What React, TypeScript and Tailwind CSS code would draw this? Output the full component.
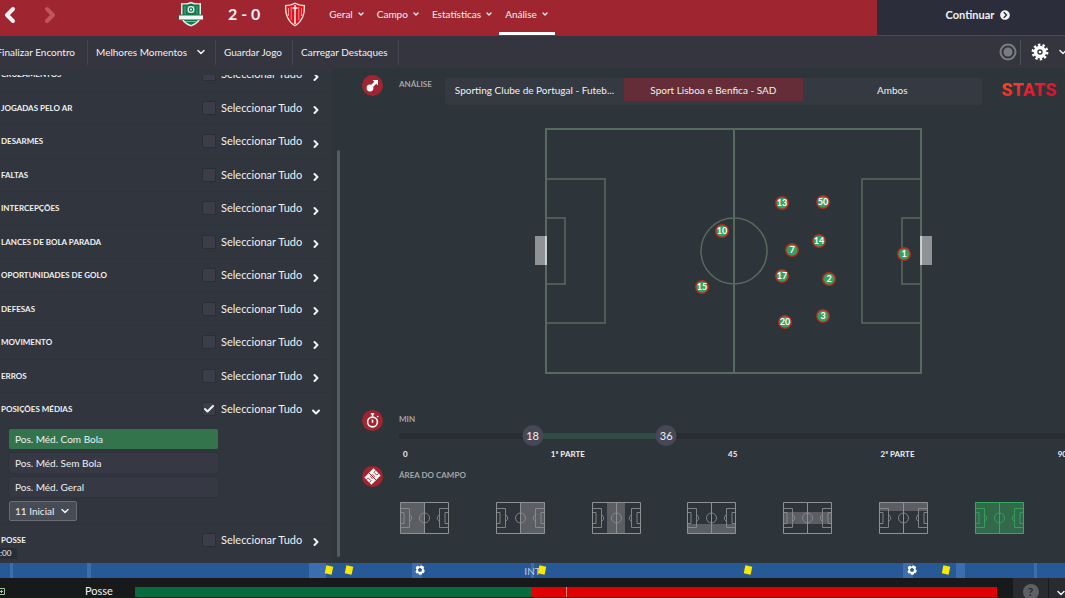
import { useState } from 'react'
import { Check, ChevronDown, ChevronLeft, ChevronRight } from 'lucide-react'
import { FaChevronCircleRight } from 'react-icons/fa'
import clsx from 'clsx'

type Zone = { x: number; y: number; w: number; h: number }

const NAV = ['Geral', 'Campo', 'Estatísticas', 'Análise']

const CATEGORIES = [
  'Cruzamentos',
  'Jogadas pelo ar',
  'Desarmes',
  'Faltas',
  'Intercepções',
  'Lances de bola parada',
  'Oportunidades de golo',
  'Defesas',
  'Movimento',
  'Erros',
  'Posições médias',
  'Posse',
]

const POSITIONS = ['Pos. Méd. Com Bola', 'Pos. Méd. Sem Bola', 'Pos. Méd. Geral']

const TEAMS = ['Sporting Clube de Portugal - Futeb...', 'Sport Lisboa e Benfica - SAD', 'Ambos']

const PLAYERS = [
  { n: 10, x: 188, y: 103 },
  { n: 15, x: 168, y: 159 },
  { n: 13, x: 248, y: 75 },
  { n: 50, x: 289, y: 74 },
  { n: 14, x: 285, y: 113 },
  { n: 7, x: 258, y: 122 },
  { n: 17, x: 248, y: 148 },
  { n: 2, x: 295, y: 151 },
  { n: 20, x: 251, y: 194 },
  { n: 3, x: 289, y: 188 },
  { n: 1, x: 370, y: 126 },
]

const ZONES: { name: string; zone: Zone }[] = [
  { name: 'Meio-campo defensivo', zone: { x: 0, y: 0, w: 24, h: 32 } },
  { name: 'Meio-campo ofensivo', zone: { x: 25, y: 0, w: 24, h: 32 } },
  { name: 'Zona central', zone: { x: 15, y: 0, w: 18, h: 32 } },
  { name: 'Flanco direito', zone: { x: 0, y: 22, w: 49, h: 10 } },
  { name: 'Corredor central', zone: { x: 0, y: 10, w: 49, h: 12 } },
  { name: 'Flanco esquerdo', zone: { x: 0, y: 0, w: 49, h: 9 } },
  { name: 'Campo inteiro', zone: { x: 0, y: 0, w: 49, h: 32 } },
]

// timeline values are percentages of the bar
const PHASES = [
  { at: 0.9, w: 0.3 },
  { at: 8.2, w: 0.3 },
  { at: 29, w: 1.6 },
  { at: 38.7, w: 0.9 },
  { at: 49.9, w: 0.2 },
  { at: 84.8, w: 0.9 },
  { at: 89.8, w: 0.8 },
  { at: 97.1, w: 0.3 },
]

const EVENTS = [
  { kind: 'card', at: 30.9 },
  { kind: 'card', at: 32.8 },
  { kind: 'goal', at: 39.4 },
  { kind: 'card', at: 50.9 },
  { kind: 'card', at: 70.2 },
  { kind: 'goal', at: 85.6 },
  { kind: 'card', at: 88.8 },
]

function SportingCrest() {
  return (
    <svg width="26" height="26" viewBox="0 0 26 26" aria-label="Sporting">
      <path d="M3 2Q8 3 13 .8 18 3 23 2L23 15Q23 22 13 25.500 3 22 3 15Z" fill="#e4efe9" />
      <path d="M4.500 3.500Q9 4 13 2.400 17 4 21.500 3.500V15Q21 21 13 24 5 21 4.500 15Z" fill="#12764c" />
      <path d="M7 5v9M19 5v9" stroke="#5fa587" strokeWidth="1" />
      <path d="M9.500 5h7v7h-7Z" fill="#5fa587" />
      <circle cx="13" cy="8.500" r="2.800" fill="#12764c" stroke="#e4efe9" strokeWidth="1.200" />
      <circle cx="13" cy="8.500" r="1.100" fill="#e4efe9" />
      <path d="M2 13.500h22l1.500 1.500v4h-25v-4Z" fill="#12764c" />
      <path d="M1 14.500h24v4H1z" fill="#f4f7f5" />
      <path d="M7 20.500h12" stroke="#7db59b" strokeWidth="1" />
    </svg>
  )
}

function BenficaCrest() {
  return (
    <svg width="22" height="25" viewBox="0 0 22 25" aria-label="Benfica">
      <path d="M1 3Q6 3 11 .5 16 3 21 3 22 18 11 24.500 0 18 1 3Z" fill="#f3e1e1" />
      <path d="M2.300 4.200Q7 4 11 2 15 4 19.700 4.200 20.300 17 11 23 1.700 17 2.300 4.200Z" fill="#df1219" />
      <path d="M7.200 5v13M14.800 5v13M4.500 6v8M17.500 6v8" stroke="#f4a5a6" strokeWidth=".9" />
      <path d="M11 3v19M8.500 6h5" stroke="#fff" strokeWidth="1.400" />
    </svg>
  )
}

function Gear() {
  return (
    <svg width="18" height="18" viewBox="-9 -9 18 18" fill="none">
      <circle r="4.500" stroke="#fff" strokeWidth="3.600" />
      <circle r="7.200" stroke="#fff" strokeWidth="2.400" strokeDasharray="2.400 2.124" />
      <circle r="1.300" fill="#fff" />
    </svg>
  )
}

function Ball() {
  return (
    <svg width="10" height="10" viewBox="-5 -5 10 10">
      <circle r="4.800" fill="#fff" />
      <path d="M0-2.200 2.100-.7 1.300 1.800H-1.300L-2.100-.7Z" fill="#275996" />
      <path d="M-2.200-5h3.200L-.6-3.200ZM5-2.800V.6L3.300-1.200ZM-5-2.400V1.600L-3.300-.3ZM4.500 3 1.800 5 2.300 2.900ZM-4 3.600-1 5-1.500 3.300Z" fill="#275996" />
    </svg>
  )
}

function SectionIcon({ name }: { name: 'shot' | 'clock' | 'field' }) {
  return (
    <svg width="21" height="21" viewBox="0 0 21 21" className="shrink-0">
      <circle cx="10.500" cy="10.500" r="10.500" fill="#a02530" />
      {name === 'shot' && (
        <g>
          <circle cx="8" cy="13" r="3.400" fill="#fff" />
          <path d="M8.500 12.500 13.500 7.500" stroke="#fff" strokeWidth="2.800" />
          <path d="M10.500 5H16v5.500Z" fill="#fff" />
        </g>
      )}
      {name === 'clock' && (
        <g fill="none" stroke="#fff" strokeWidth="1.600">
          <circle cx="10.500" cy="12" r="4.900" />
          <path d="M8.800 3.700h3.400M10.500 3.500v3M15.200 6l1 1M10.500 9.500v3.200" />
        </g>
      )}
      {name === 'field' && (
        <g transform="rotate(-45 10.500 10.500)">
          <rect x="4" y="5.500" width="13" height="10" fill="#fff" />
          <path d="M10.500 5.500v10M4 8.500h2.500v4H4M17 8.500h-2.500v4H17" fill="none" stroke="#a02530" strokeWidth=".9" />
          <circle cx="10.500" cy="10.500" r="1.700" fill="none" stroke="#a02530" strokeWidth=".9" />
        </g>
      )}
    </svg>
  )
}

function MiniPitch({ zone, active }: { zone: Zone; active: boolean }) {
  return (
    <svg width="49" height="32" viewBox="0 0 49 32" fill="none" stroke={active ? '#34a85f' : '#8d9192'}>
      <rect x={zone.x} y={zone.y} width={zone.w} height={zone.h} fill={active ? '#32694a' : '#5b5e63'} stroke="none" />
      <path d="M.5.5h48v31H.5ZM24.500.5v31" />
      <g opacity=".85">
        <circle cx="24.500" cy="16" r="5" />
        <path d="M.5 6.500h9v19h-9M.5 10.500h3.500v11H.5M9.500 12.500Q14 16 9.500 19.500" />
        <path d="M48.500 6.500h-9v19h9M48.500 10.500H45v11h3.500M39.500 12.500Q35 16 39.500 19.500" />
      </g>
    </svg>
  )
}

function Pitch() {
  return (
    <svg width="398" height="246" viewBox="0 0 398 246" fill="none">
      <g stroke="#58695f" strokeWidth="2">
        <path d="M12 1H387V245H12ZM200 1V245" />
        <path d="M12 51H71V195H12M12 90H31V156H12M387 51H328V195H387M387 90H368V156H387" strokeWidth="1.500" />
        <circle cx="200" cy="123" r="33" strokeWidth="1.500" />
      </g>
      <path d="M1 108h11v29H1ZM387 108h11v29h-11Z" fill="#909396" />
      <path d="M12 108v29M387 108v29" stroke="#e8eaea" strokeWidth="1.500" />
      {PLAYERS.map(p => (
        <g key={p.n}>
          <circle cx={p.x} cy={p.y} r="6.300" fill="#36a063" stroke="#b8281c" strokeWidth="1.500" />
          <text x={p.x} y={p.y + 3} textAnchor="middle" fill="#fff" className="text-[9px] font-bold">{p.n}</text>
        </g>
      ))}
    </svg>
  )
}

export default function App() {
  const [checked, setChecked] = useState<string[]>(['Posições médias'])
  const [position, setPosition] = useState(POSITIONS[0])
  const [team, setTeam] = useState(1)
  const [zone, setZone] = useState(6)
  const [range, setRange] = useState([18, 36])

  function toggle(name: string) {
    setChecked(c => (c.includes(name) ? c.filter(n => n !== name) : [...c, name]))
  }

  function moveThumb(i: number, value: number) {
    setRange(r => (i === 0 ? [Math.min(value, r[1]), r[1]] : [r[0], Math.max(value, r[0])]))
  }

  return (
    <div className="flex h-screen flex-col overflow-hidden bg-[#2d343a] font-[Lato,sans-serif] text-[10px] leading-4 text-[#f0f1f2]">
      {/* Header */}
      <header className="flex h-9 shrink-0 border-b border-[#8d2c38] bg-[#9f2630]">
        <div className="-ml-[2px] flex w-[180px] shrink-0 items-center pb-[5px]">
          <button aria-label="Anterior" className="w-10"><ChevronLeft className="size-6" strokeWidth={4} /></button>
          <button aria-label="Seguinte" className="text-[#c1565c]"><ChevronRight className="size-6" strokeWidth={4} /></button>
        </div>
        <div className="flex items-center gap-6 pb-[7px]">
          <SportingCrest />
          <span className="text-[16px] font-bold">2 - 0</span>
          <BenficaCrest />
        </div>
        <nav className="ml-[17px] flex flex-1">
          {NAV.map((item, i) => (
            <button
              key={item}
              className={clsx(
                'flex items-center gap-1 border-b-3 px-[6px] pb-1',
                i === NAV.length - 1 ? 'border-white' : 'border-transparent'
              )}
            >
              {item}
              <ChevronDown className="size-2" strokeWidth={4} />
            </button>
          ))}
        </nav>
        <button className="flex w-[188px] shrink-0 items-center justify-center gap-[6px] bg-[#2b2d3b] pb-[6px] pl-[14px] text-[11px] font-bold">
          Continuar
          <FaChevronCircleRight className="size-[10px]" />
        </button>
      </header>

      {/* Toolbar */}
      <div className="flex h-8 shrink-0 items-center bg-[#34353f]">
        <div className="flex h-[25px] divide-x divide-[#44464f] border-r border-[#44464f]">
          <button className="-ml-3 w-[100px] pr-3 text-right whitespace-nowrap">Finalizar Encontro</button>
          <button className="flex items-center gap-2 px-2">
            Melhores Momentos
            <ChevronDown className="size-3" strokeWidth={3} />
          </button>
          <button className="pr-[10px] pl-2">Guardar Jogo</button>
          <button className="pr-[10px] pl-2">Carregar Destaques</button>
        </div>
        <div className="-mr-1 ml-auto flex h-[25px] items-center">
          <button aria-label="Gravar" className="pr-[3px]">
            <svg width="18" height="18" viewBox="-9 -9 18 18">
              <circle r="7.500" fill="none" stroke="#797b82" strokeWidth="2" />
              <circle r="4.500" fill="#797b82" />
            </svg>
          </button>
          <button aria-label="Opções" className="flex h-full items-center gap-2 border-l border-[#50525a] pl-[10px]">
            <Gear />
            <ChevronDown className="size-3" strokeWidth={3} />
          </button>
        </div>
      </div>

      <div className="flex min-h-0 flex-1">
        {/* Filters */}
        <aside className="relative flex w-[332px] shrink-0 flex-col bg-[#31353d] pt-[7px]">
          <div className="flex min-h-0 flex-1 flex-col overflow-hidden">
            <div className="-mt-[18px] flex flex-1 flex-col pb-[7px]">
              {CATEGORIES.map(name => {
                const open = name === 'Posições médias'
                return (
                  <div key={name} className="contents">
                    <div className="flex min-h-0 flex-1 basis-0 items-center border-t border-[#2e3239] pl-px">
                      <span className="w-[201px] text-[8px] font-bold uppercase">{name}</span>
                      <label className="flex flex-1 items-center gap-[5px] text-[11px]">
                        <span className="grid size-[14px] place-items-center">
                          <input
                            type="checkbox"
                            checked={checked.includes(name)}
                            onChange={() => toggle(name)}
                            className="col-start-1 row-start-1 size-[14px] appearance-none rounded-[2px] border border-[#2c2e37] bg-[#3b3d48]"
                          />
                          {checked.includes(name) && (
                            <Check className="pointer-events-none col-start-1 row-start-1 size-3" strokeWidth={4} />
                          )}
                        </span>
                        Seleccionar Tudo
                      </label>
                      <button aria-label={`Abrir ${name}`} className="w-[22px] pt-[5px]">
                        {open
                          ? <ChevronDown className="size-3" strokeWidth={4} />
                          : <ChevronRight className="size-3" strokeWidth={4} />}
                      </button>
                    </div>
                    {open && (
                      <div className="flex h-[97px] shrink-0 flex-col items-start gap-1 px-[9px] pt-[3px]">
                        {POSITIONS.map(p => (
                          <button
                            key={p}
                            onClick={() => setPosition(p)}
                            className={clsx(
                              'h-5 w-[209px] rounded-[2px] px-[6px] text-left',
                              p === position ? 'bg-[#33744d]' : 'bg-[#363943] shadow-[0_0_1px_#23262c]'
                            )}
                          >
                            {p}
                          </button>
                        ))}
                        <div className="grid items-center">
                          <select
                            aria-label="Jogadores"
                            className="col-start-1 row-start-1 h-5 w-[68px] appearance-none rounded-[2px] border border-[#686c75] bg-[#474b55] pl-[5px]"
                          >
                            <option>11 Inicial</option>
                          </select>
                          <ChevronDown className="pointer-events-none col-start-1 row-start-1 mr-[6px] size-3 justify-self-end" strokeWidth={3} />
                        </div>
                      </div>
                    )}
                  </div>
                )
              })}
            </div>
          </div>
          <span className="absolute bottom-1 left-0 bg-[#2a2c33] pr-[6px] text-[8px] leading-[11px]">:00</span>
        </aside>
        <div className="flex w-[9px] shrink-0 flex-col justify-end pb-[6px] pl-[5px]">
          <div className="h-5/6 w-[3px] rounded-full bg-[#555c60]" />
        </div>

        {/* Analysis */}
        <main className="flex min-w-0 flex-1 flex-col pt-[7px] pl-[21px]">
          <section className="flex gap-4 pr-2">
            <SectionIcon name="shot" />
            <div className="flex min-w-0 flex-1">
              <h2 className="w-[46px] text-[8px] leading-[18px] font-bold text-[#a3a7aa]">ANÁLISE</h2>
              <div className="mt-[3px] grid min-w-0 flex-1 grid-cols-3 overflow-hidden rounded-[3px] bg-[#353941]">
                {TEAMS.map((name, i) => (
                  <button
                    key={name}
                    onClick={() => setTeam(i)}
                    className={clsx('h-[23px] truncate px-[6px]', i === team && 'bg-[#652d37]')}
                  >
                    {name}
                  </button>
                ))}
              </div>
              <strong className="ml-5 bg-linear-to-br from-[#ff5a1c] via-[#e81c2e] to-[#c8102e] bg-clip-text font-[Roboto,sans-serif] text-[18px] leading-[30px] font-black text-transparent">
                STATS
              </strong>
            </div>
          </section>

          <div className="-mr-1 flex flex-1 justify-center pt-[23px] pl-[35px]">
            <Pitch />
          </div>

          <section className="flex h-14 shrink-0 gap-4">
            <SectionIcon name="clock" />
            <div className="-mr-[2px] min-w-0 flex-1">
              <h2 className="h-[15px] text-[8px] leading-[18px] font-bold text-[#a3a7aa]">MIN</h2>
              <div className="relative flex h-[21px] items-center">
                <div className="h-[6px] w-full rounded-full bg-[#282d34]" />
                <div
                  className="absolute h-[6px] bg-[#2d4d42]"
                  style={{ left: `${range[0] / 0.9}%`, width: `${(range[1] - range[0]) / 0.9}%` }}
                />
                {range.map((value, i) => (
                  <label key={i}>
                    <input
                      type="range"
                      min={0}
                      max={90}
                      value={value}
                      aria-label={i === 0 ? 'Minuto inicial' : 'Minuto final'}
                      onChange={e => moveThumb(i, Number(e.target.value))}
                      className="absolute inset-0 w-full opacity-0"
                    />
                    <span
                      className="pointer-events-none absolute top-0 flex size-[21px] -translate-x-1/2 items-center justify-center rounded-full bg-[#474855] text-[11px]"
                      style={{ left: `${value / 0.9}%` }}
                    >
                      {value}
                    </span>
                  </label>
                ))}
              </div>
              <div className="flex justify-between pl-1 text-[8px] font-bold">
                <span>0</span>
                <span>1ª PARTE</span>
                <span>45</span>
                <span>2ª PARTE</span>
                <span>90</span>
              </div>
            </div>
          </section>

          <section className="flex h-[97px] shrink-0 gap-4">
            <SectionIcon name="field" />
            <div className="min-w-0 flex-1">
              <h2 className="mb-[18px] text-[8px] leading-[18px] font-bold text-[#a3a7aa]">ÁREA DO CAMPO</h2>
              <div className="flex justify-between pr-[41px] pl-px">
                {ZONES.map((z, i) => (
                  <button key={z.name} aria-label={z.name} onClick={() => setZone(i)}>
                    <MiniPitch zone={z.zone} active={i === zone} />
                  </button>
                ))}
              </div>
            </div>
          </section>
        </main>
      </div>

      {/* Match timeline */}
      <div className="relative h-[15px] shrink-0 bg-[#275996]">
        {PHASES.map(p => (
          <span key={p.at} className="absolute inset-y-0 bg-[#3c6eaf]" style={{ left: `${p.at}%`, width: `${p.w}%` }} />
        ))}
        <span className="absolute left-1/2 -translate-x-1/2 text-[#b9cbe2]">INT</span>
        {EVENTS.map(e => (
          <span key={e.at} className="absolute top-[2px] -translate-x-1/2" style={{ left: `${e.at}%` }}>
            {e.kind === 'goal' ? <Ball /> : <span className="mt-px block h-2 w-[7px] rotate-12 bg-[#fbe700]" />}
          </span>
        ))}
      </div>

      {/* Possession */}
      <footer className="flex h-5 shrink-0 items-end bg-[#17191a]">
        <div className="flex w-[135px] shrink-0 items-center">
          <svg width="5" height="7" viewBox="0 0 5 7" className="mr-20">
            <path d="M0 .5h4.500v6H0M0 3.500h3M1.500 2v3" fill="none" stroke="#a9c3a0" />
          </svg>
          <span className="text-[11px] leading-[14px]">Posse</span>
        </div>
        <div className="mb-px flex h-[10px] flex-1">
          <div className="w-[46%] bg-[#076b40]" />
          <div className="flex-1 bg-[#e10000] pl-[34px]">
            <div className="h-full w-px bg-[#f08080]" />
          </div>
        </div>
        <div className="ml-4 flex h-full shrink-0 gap-px overflow-hidden">
          <button aria-label="Ajuda" className="w-[35px] bg-[#2a2a31] pt-[6px]">
            <span className="mx-auto flex size-4 items-center justify-center rounded-full bg-[#5f6064] text-[12px] font-bold text-[#2a2a31]">?</span>
          </button>
          <button aria-label="Mais" className="w-4 overflow-hidden bg-[#2a2a31] pt-[9px] pl-[6px]">
            <ChevronDown className="size-3" strokeWidth={3} />
          </button>
        </div>
      </footer>
    </div>
  )
}
